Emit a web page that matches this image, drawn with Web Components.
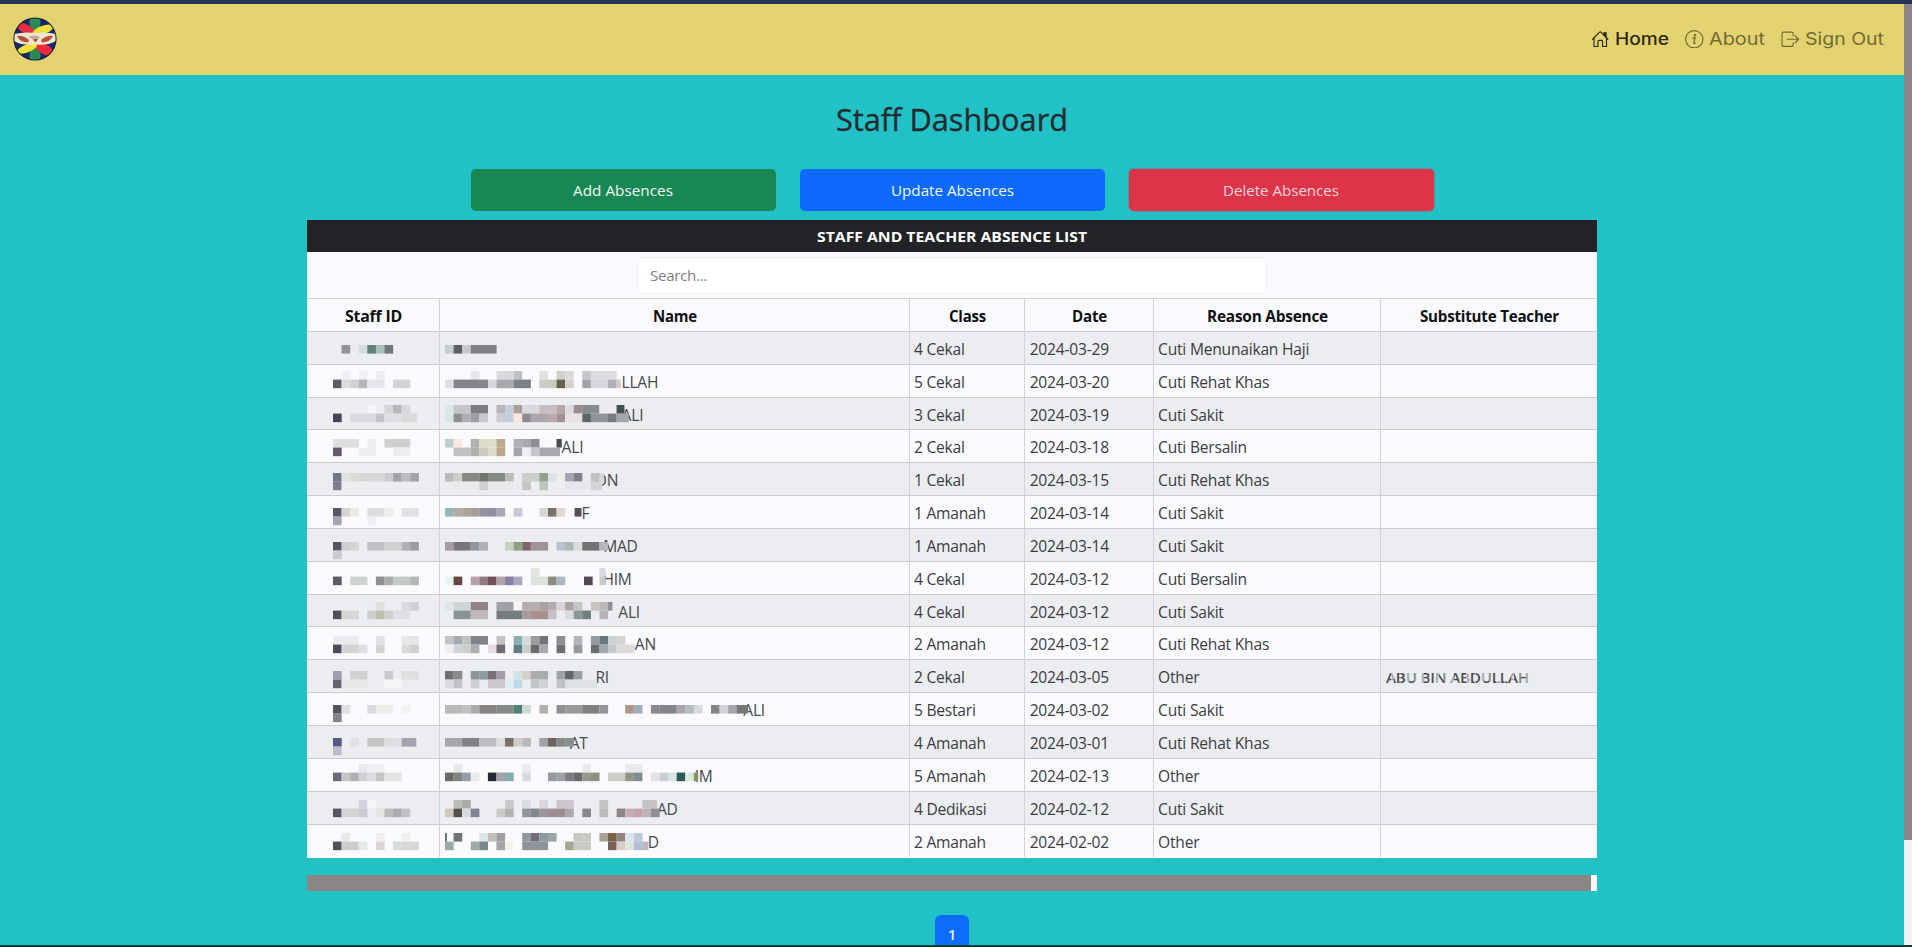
<!DOCTYPE html>
<html lang="en">
<head>
<meta charset="utf-8">
<title>Staff Dashboard</title>
<style>
html,body{margin:0;height:100%;overflow:hidden;background:#22c1c5}
body{font-family:"Open Sans","Noto Sans",sans-serif;color:#212529}
</style>
</head>
<body>
<staff-app>
  <top-nav slot="nav">
    <nav-item icon="house" active w="54">Home</nav-item>
    <nav-item icon="info" w="56">About</nav-item>
    <nav-item icon="exit" w="79">Sign Out</nav-item>
  </top-nav>
  <fit-text slot="title" w="232">Staff Dashboard</fit-text>
  <action-button slot="actions" tone="success" w="100">Add Absences</action-button>
  <action-button slot="actions" tone="primary" w="123">Update Absences</action-button>
  <action-button slot="actions" tone="danger" w="116">Delete Absences</action-button>
  <absence-table></absence-table>
  <page-button slot="pager">1</page-button>
</staff-app>
<script>
/* Sets its text to a given width by stretching it horizontally. */
class FitText extends HTMLElement{
  connectedCallback(){
    if(this.shadowRoot) return;
    this.attachShadow({mode:'open'}).innerHTML='<style>:host{display:inline-block;white-space:nowrap}span{display:inline-block;transform-origin:0 50%}</style><span><slot></slot></span>';
    const s=this.shadowRoot.querySelector('span'),w=+this.getAttribute('w');
    if(w){
      const n=s.getBoundingClientRect().width;
      s.style.transform=`scaleX(${w/n})`;
      s.style.marginRight=(w-n)+'px';
    }
  }
}

class CrestLogo extends HTMLElement{
  constructor(){
    super();
    this.attachShadow({mode:'open'}).innerHTML=`<style>:host{display:block;width:44px;height:44px}svg{display:block}</style>
<svg width="44" height="44" viewBox="0 0 44 44"><defs><clipPath id="c"><circle cx="22" cy="22" r="20.6"/></clipPath></defs>
<circle cx="22" cy="22" r="21.6" fill="#181a2e"/>
<g clip-path="url(#c)"><rect width="44" height="44" fill="#17286d"/>
<ellipse cx="22" cy="5.5" rx="5.5" ry="8.5" fill="#2c8b55"/><ellipse cx="22" cy="38.5" rx="5.5" ry="8.5" fill="#2c8b55"/>
<ellipse cx="13" cy="12" rx="10" ry="4.6" fill="#e32f3f" transform="rotate(28 13 12)"/>
<ellipse cx="31" cy="32" rx="10" ry="5" fill="#ea2b3b" transform="rotate(28 31 32)"/>
<ellipse cx="30" cy="13" rx="11" ry="4.2" fill="#eee13a" transform="rotate(-20 30 13)"/>
<ellipse cx="14" cy="31.5" rx="10.5" ry="4" fill="#eee13a" transform="rotate(-20 14 31.5)"/>
<path d="M1 17Q11 14.5 22 16Q33 14.5 43 17L43 24Q34 29 22 27.5Q10 29 1 24Z" fill="#efe6d0"/>
<path d="M4 19Q10 18 16 23L15 25.5Q7 25.5 4 19Z" fill="#b5523c"/><path d="M40 19Q34 18 28 23L29 25.5Q37 25.5 40 19Z" fill="#b5523c"/>
<path d="M16 19.5Q23 17 28 20.5Q23 20.5 21 24.5Q19 21.5 16 19.5Z" fill="#c9a894"/>
<path d="M20.5 22.5L25.5 21.5L22.5 25.5Z" fill="#9e4a40"/></g></svg>`;
  }
}

class TopNav extends HTMLElement{
  constructor(){
    super();
    this.attachShadow({mode:'open'}).innerHTML=`<style>:host{flex:none;display:flex;align-items:center;justify-content:space-between;height:71px;background:#e3d370;padding:0 20.5px 0 12.7px;box-sizing:border-box}
nav{display:flex;gap:16.5px}</style><crest-logo></crest-logo><nav><slot></slot></nav>`;
  }
}

const ICONS={
  house:'<path d="M2.6 7V14.3H6V10.2Q6 9 7 9H9Q10 9 10 10.2V14.3H13.4V7M1.4 8L7.2 2Q8 1.2 8.8 2L14.6 8"/><path d="M11.2 2.2H13.2V6.4L11.2 4.4Z" fill="currentColor" stroke-width=".6"/>',
  info:'<circle cx="8" cy="8" r="7.5"/><path d="M6.8 6.8L8.7 6.5L7.6 11.2Q7.6 11.9 8.9 11.3" stroke-width="1.1"/><circle cx="8.7" cy="4.5" r=".55" fill="currentColor"/>',
  exit:'<path d="M10.5 5V2.9Q10.5 1.8 9.4 1.8H2Q.9 1.8 .9 2.9V13.1Q.9 14.2 2 14.2H9.4Q10.5 14.2 10.5 13.1V11M5.5 8H15.2M12.2 5L15.2 8L12.2 11"/>'
};
class NavItem extends HTMLElement{
  connectedCallback(){
    if(this.shadowRoot) return;
    this.attachShadow({mode:'open'}).innerHTML=`<style>:host{display:flex;align-items:center;gap:5px;font:400 16.8px/26px Inter,sans-serif;color:#736932}
:host([active]){color:#2b2712;font-weight:500}
svg{display:block}</style>
<svg width="18.5" height="18.5" viewBox="0 0 16 16" fill="none" stroke="currentColor" stroke-width="1" stroke-linecap="round" stroke-linejoin="round">${ICONS[this.getAttribute('icon')]}</svg><fit-text w="${this.getAttribute('w')}">${this.textContent}</fit-text>`;
  }
}

class ActionButton extends HTMLElement{
  connectedCallback(){
    if(this.shadowRoot) return;
    this.attachShadow({mode:'open'}).innerHTML=`<style>:host{display:block;width:305px;height:42px}
button{display:flex;align-items:center;justify-content:center;width:100%;height:100%;border:0;border-radius:5px;padding:0;color:#f2f7f5;font:400 15.3px "Open Sans","Noto Sans",sans-serif;background:#198754}
:host([tone=primary]) button{background:#0d6afd}
:host([tone=danger]) button{background:#dc3549;color:#f6d5d9;box-shadow:0 0 2px #e02c44}</style>
<button><fit-text w="${this.getAttribute('w')}">${this.textContent}</fit-text></button>`;
  }
}

class PageButton extends HTMLElement{
  constructor(){
    super();
    this.attachShadow({mode:'open'}).innerHTML=`<style>:host{flex:none;display:block;width:34px;height:42px;border-radius:6px;background:#0d6cfd;color:#e6f1ff;font-weight:600;font-size:15px;line-height:38px;text-align:center}</style><slot></slot>`;
  }
}

/* Mosaic that covers private data. Blocks: column,count,strip,colour. */
const P=8.58;
class PixelMask extends HTMLElement{
  connectedCallback(){
    if(this.shadowRoot) return;
    const b=(this.getAttribute('blocks')||'').split(' ').filter(Boolean).map(t=>{
      const [c,n,r,k]=t.split(',');
      return `<rect x="${(c*P).toFixed(2)}" y="${(r*P).toFixed(2)}" width="${(n*P+.1).toFixed(2)}" height="8.6" fill="#${k}"/>`;
    }).join('');
    this.attachShadow({mode:'open'}).innerHTML=`<style>:host{display:block;position:absolute;left:0}svg{display:block;overflow:visible}</style><svg width="1" height="1" shape-rendering="geometricPrecision">${b}</svg>`;
  }
}

/* y: top of the first strip, id/n: mosaic blocks, t: visible end of the name, e: its right edge */
const ROWS=[
{y:345.3,id:'1,1,0,949498 3,1,0,d9dcde 4,1,0,628279 5,1,0,a8bfbb 6,1,0,737578',n:'0,1,0,c5cccb 1,1,0,5f5e62 2,1,0,c3cbcd 3,3,0,808184',c:'4 Cekal',d:'2024-03-29',r:'Cuti Menunaikan Haji'},
{y:370.8,id:'1,1,0,f1f1f3 3,1,0,f1f1f3 5,1,0,ededf0 0,1,1,5e5d6b 1,1,1,dcdcda 2,1,1,d0d0d2 3,1,1,b5b6ba 4,2,1,e6e6e9 7,2,1,d3d3d6',n:'3,1,0,e5e7e9 6,2,0,d8dadb 8,1,0,bcc3c6 11,1,0,dfe2dd 13,1,0,cfd0cc 14,1,0,d9dad7 16,1,0,c6c5ca 17,3,0,dcdadf 0,1,1,e1e0e5 1,4,1,848589 5,1,1,d5d8dc 6,2,1,a7a9ae 8,2,1,7a8083 11,1,1,cbccc4 12,1,1,c8cabf 13,1,1,67604b 14,1,1,d3d1cc 16,1,1,a5a3aa 17,2,1,d9d6dd 19,1,1,b1b0b5 20,0.5,1,cfced2',t:'LLAH',e:658.3,c:'5 Cekal',d:'2024-03-20',r:'Cuti Rehat Khas'},
{y:405.5,id:'4,1,0,f5f5f7 6,1,0,d6d6d9 7,1,0,b6b6bb 8,1,0,d9d9dc 0,1,1,454354 2,3,1,dadade 5,1,1,c3c3c8 6,2,1,dfdfe2 8,1.8,1,dadadd',n:'0,1,0,dce7e3 1,2,0,c4c6c9 3,2,0,7b7d80 6,1,0,b5b6b9 7,1,0,c4cedb 8,1,0,aa9d9c 9,2,0,dadadd 11,2,0,c6bec0 13,1,0,b6a6a8 14,1,0,dddadd 15,1,0,9c8c90 16,2,0,868b8c 18,2,0,ececef 20,0.9,0,424d4e 0,1,1,d9e7e3 1,1,1,8e8f94 2,1,1,b2afb4 3,1,1,9e9ea2 4,1,1,c8c8cc 6,1,1,cbcbd0 7,1,1,c1cddb 8,1,1,f7e6df 9,1,1,8f8990 10,2,1,aaa6ab 12,1,1,baa9ac 13,1,1,a29193 14,2,1,eae1e2 16,1,1,596769 17,2,1,8f9597 19,1,1,777b7f 20,1.4,1,a3a6a9',t:'ALI',e:643.3,c:'3 Cekal',d:'2024-03-19',r:'Cuti Sakit'},
{y:439.4,id:'0,3,0,dededf 4,1,0,eeeef0 6,3,0,cfcfd2 0,1,1,635c68 3,2,1,efeff2 7,2,1,ededf0',n:'0,1,0,bdcfcd 1,1,0,fae9df 3,1,0,b5b0ae 4,2,0,dddccb 6,1,0,baa98a 8,1,0,b1aeb5 9,1,0,a9a7ae 10,1,0,8f8d94 13,0.6,0,4c4a50 1,2,1,bfc0c2 3,1,1,b0b0ac 4,1,1,cdccbd 5,1,1,dddcc8 6,1,1,bba789 8,1,1,a6a3ab 9,1,1,eeeef2 10,1,1,c6c4ca 11,2.4,1,a8a7ac',t:'ALI',e:583.3,c:'2 Cekal',d:'2024-03-18',r:'Cuti Bersalin'},
{y:473.6,id:'0,1,0,747487 1,1,0,e1e2dd 2,1,0,d8dbd2 3,3,0,d7d7d9 6,1,0,cccbd0 7,1,0,a2a1aa 8,1,0,babac0 9,1,0,a1a2aa 0,1,1,7d7b8d 1,3,1,eeeef1',n:'0,1,0,b9bab9 1,1,0,cccec7 2,2,0,868981 4,1,0,717570 5,2,0,858983 7,1,0,babdb8 9,2,0,cccec8 11,1,0,959d8c 12,1,0,dfdfe7 14,1,0,a3a2b0 15,1,0,7f7e8b 17,1,0,c1c1c4 18,.5,0,d6d6d8 1,3,1,e9eaec 4,1,1,d0d1d1 5,3,1,e9e9eb 9,1,1,c3c6c3 11,1,1,bfc5bb 14,3,1,e6e6ed 17,1.3,1,d4d4d7',t:'ON',e:618.3,c:'1 Cekal',d:'2024-03-15',r:'Cuti Rehat Khas'},
{y:508,id:'0,1,0,585766 1,1,0,d9d2d4 2,1,0,e9e9e6 4,2,0,dcdddf 6,1,0,ededea 8,2,0,e1e1e4 0,1,1,a4a5b6 4,1,1,f0f0f2',n:'0,1,0,92b7bb 1,1,0,b1aca1 2,1,0,a9a399 3,1,0,a39d97 4,1,0,97929e 5,1,0,908ea1 6,1,0,a9a7b3 8,1,0,c5c8dd 11,1,0,d8d8d6 12,1,0,77706b 13,1,0,dfd7d1 15.1,.8,0,555058',t:'F',e:589.3,c:'1 Amanah',d:'2024-03-14',r:'Cuti Sakit'},
{y:542,id:'0,1,0,555461 1,1,0,cececf 2,1,0,d5d5d5 4,2,0,bebfc3 6,2,0,cfcfd0 8,1,0,b1b1b5 9,1,0,9b9ba3 0,1,1,cbcbcf',n:'0,1,0,a29ba0 1,2,0,77777b 3,1,0,9396a0 4,1,0,afb0b5 7,1,0,c7cfbf 8,1,0,90a182 9,1,0,80666c 10,2,0,a09196 13,1,0,bcc1d0 14,1,0,acb7b7 15,1,0,dadcdb 16,2,0,727275 18,1,0,b7b6bb',t:'MAD',e:637.7,c:'1 Amanah',d:'2024-03-14',r:'Cuti Sakit'},
{y:567.7,id:'0,1,1,5b5a66 2,2,1,ced2d3 5,1,1,8f8f92 6,1,1,aaacae 7,2,1,c4c7c7 9,1,1,b4b6b6',n:'10,1,0,e0e5df 18,.7,0,dcdadd 0,1,1,ebf3f0 1,1,1,664746 3,1,1,b5a1a6 4,1,1,917b83 5,1,1,725059 6,1,1,b1a1aa 7,1,1,827fa2 8,1,1,aaa8be 10,2,1,dde1dc 12,1,1,8c8c81 13,1,1,acb8c2 16.2,1,1,504b51 18,.7,1,ccc9ce',t:'HIM',e:631.7,c:'4 Cekal',d:'2024-03-12',r:'Cuti Bersalin'},
{y:602.2,id:'3,1,0,eaeef1 5,1,0,dfdfdc 8,1,0,dbdbdf 9,1,0,cfcfd4 0,1,1,4f505c 1,2,1,d6d6d7 4,1,1,cfcfce 5,1,1,bebfb0 6,1,1,cfcfce 7,2,1,dedfe2',n:'0,1,0,dde8e4 1,2,0,d0d6d8 3,2,0,908488 6,2,0,a0a1a4 8,1,0,f4f4f5 9,2,0,b4aeaf 11,1,0,aaa09f 12,1,0,b2acb2 13,1,0,d8d2df 14,1,0,aba3a3 15,1,0,c2c7c6 17,1,0,cbc1bf 18,1,0,bbb8bd 19,.5,0,8f9094 1,2,1,899496 3,2,1,c0b8bb 6,3,1,747c80 9,1,1,a59d9d 10,2,1,a6918e 12,1,1,c8c0c8 14,1,1,dadadc 15,1,1,8d9799 16,1,1,707d83 18,1,1,b5b5b8',t:'ALI',e:640,c:'4 Cekal',d:'2024-03-12',r:'Cuti Sakit'},
{y:636.6,id:'0,3,0,ebebed 5,1,0,e2e2e4 8,2,0,e7e7ea 0,1,1,464c59 1,2,1,d4d4d5 3,1,1,dedfe0 5,1,1,d4d5d0 8,1,1,dadadb 9,1,1,d0d0d3',n:'0,1,0,c3c3c3 1,1,0,a5a8b0 2,1,0,bec4bf 3,2,0,828387 6,1,0,c3c1c2 8,1,0,8facb2 9,1,0,d4dbdd 10,1,0,9c9d9f 11,1,0,717479 13,1,0,8c8d8e 15,1,0,b2b6b7 17,1,0,959a9b 18,1,0,68777b 19,1,0,c9d0d2 20,1,0,d4d4d3 0,1,1,eeeef1 1,1,1,d0d3d8 2,1,1,cdd0c8 3,1,1,abaeb2 5,1,1,e4dce4 6,1,1,726a73 8,1,1,607c86 9,1,1,cbd0cd 10,1,1,6e6b6d 11,1,1,a9aaad 13,1,1,6e7070 15,1,1,959a9b 17,1,1,6b6e70 18,1,1,a2a8aa 19,1,1,c5c8ca 20,2.1,1,dedad8',t:'AN',e:656,c:'2 Amanah',d:'2024-03-12',r:'Cuti Rehat Khas'},
{y:671,id:'0,1,0,9e9eae 2,2,0,cfd0d2 6,1,0,c9c9ce 8,2,0,dfdfe1 0,1,1,636272 1,3,1,e6e7e9 6,2,1,f5f5f8',n:'0,1,0,706e71 1,1,0,8a898c 3,1,0,929598 4,1,0,8b9da1 5,1,0,797176 6,1,0,a49ca6 8,1,0,d4e1e7 9,1,0,d4d0c7 10,2,0,a8acac 13,1,0,9fa2a3 14,1,0,626769 15,1,0,9a9ea2 0,1,1,d9dbdc 1,1,1,c2c3c7 3,1,1,cfced2 5,2,1,cdc7ce 7,1,1,dceef3 8,1,1,bbdae8 10,1,1,c1c5ca 11,1,1,cfd1d4 13,1,1,c1c2c5 14,3.7,1,dee1e4',t:'RI',e:609,c:'2 Cekal',d:'2024-03-05',r:'Other',s:'ABU BIN ABDULLAH'},
{y:705,id:'0,1,0,555461 1,1,0,e0e0e3 4,1,0,dbdbdc 5,2,0,ededea 8,1,0,f3f3ee 0,1,1,84838e',n:'0,2,0,b7b8b9 2,1,0,c0c1c1 3,1,0,aaaaad 4,2,0,898381 6,2,0,848888 8,1,0,4e8279 9,1,0,d0d8d3 11,1,0,b2afac 13,1,0,8f8e91 14,2,0,99999c 16,2,0,808083 18,1,0,949498 21,1,0,ad9786 22,1,0,a0afbc 24,1,0,89898e 25,2,0,838389 27,1,0,a6a6ac 28,1,0,b4bcbe 29,1,0,d7d9db 31,1,0,868488 32,1,0,d4d1d6 33,1,0,a6a4a7 34,1.3,0,777779',t:'ALI',e:765,c:'5 Bestari',d:'2024-03-02',r:'Cuti Sakit'},
{y:738.6,id:'0,1,0,595684 2,1,0,e0e0e9 4,2,0,c5c6c3 6,2,0,dedee1 8,1.7,0,a3a2ae 0,1,1,bcbacb',n:'0,2,0,a6a6aa 2,2,0,828089 4,2,0,bcbdc3 6,1,0,ddd 7,1,0,787067 8,1,0,cfccca 9,1,0,bbb7b6 11,1,0,a1a1a5 12,1,0,6b6460 13,1,0,86888b 14,1,0,87938d',t:'AT',e:587.7,c:'4 Amanah',d:'2024-03-01',r:'Cuti Rehat Khas'},
{y:764.4,id:'3,1,0,e8e8eb 4,2,0,efeff2 0,1,1,69687a 1,1,1,c6c3c5 2,1,1,b4aeb0 3,1,1,cfcdd5 4,1,1,dbdbe0 5,1,1,c4c3c6 6,2,1,e3e3e4',n:'1,1,0,e5e7ea 9,1,0,eaeaed 16,1,0,eaeaee 21,2,0,e9e9ed 0,1,1,6b6962 1,1,1,7e8381 2,1,1,949bab 3,1,1,ebe9ef 5,1,1,262a33 6,1,1,a5a2aa 7,1,1,86abb4 9,1,1,dadadc 12,1,1,96999c 13,1,1,9fa3a8 14,1,1,7b7d82 15,1,1,696a6c 16,1,1,93998e 17,1,1,8f917d 19,2,1,cfcec5 21,1,1,95948b 22,1,1,7f8b95 24,1,1,e3e3e5 25,1,1,cacfd2 26,1,1,dbe2e2 27,1,1,30565b 28,1,1,d5ebdb 29,.5,1,899065',t:'IM',e:712.7,c:'5 Amanah',d:'2024-02-13',r:'Other'},
{y:799.8,id:'3,1,0,d3d1da 4,1,0,f5f5f7 0,1,1,575663 1,2,1,d2d3d2 3,1,1,cbcad3 5,1,1,e5e5e8 6,1,1,bbbbbe 7,1,1,acacb0 8,1,1,c2c2c4',n:'1,1,0,bdbdb9 2,1,0,a9a8aa 7,1,0,c7c7c8 9,1,0,dddddf 11,1,0,d7d7da 13,2,0,cbc6cb 18,1,0,c4c4c5 23,1.7,0,c6c1c4 0,1,1,cdcabc 1,1,1,55524d 2,1,1,d9dcdc 3,1,1,828492 6,1,1,c9cbc7 7,1,1,b1b2b3 9,1,1,91949a 10,1,1,83858e 11,1,1,9b969b 12,2,1,9c8d95 14,1,1,a9a9ac 16,1,1,88888c 18,1,1,b9babb 20,1,1,8d8583 21,1,1,c4acb2 22,1,1,c69fad 23,1,1,bab3b8 24,1,1,908f93',t:'AD',e:677.7,c:'4 Dedikasi',d:'2024-02-12',r:'Cuti Sakit'},
{y:833,id:'1,1,0,e6e7e6 5,1,0,eeeeec 8,1,0,eeefed 0,1,1,4d5153 1,2,1,cacdcb 3,1,1,e3eae8 5,1,1,dad4d4 7,1,1,d6ddd6 8,2,1,d7d7d7',n:'0,.2,0,606870 1,1,0,727673 4,1,0,dbe5e7 5,1,0,c0bdb7 6,1,0,a29da0 9,1,0,94979e 10,1,0,6f6d7a 11,1,0,90989f 12,1,0,97a7aa 15,1,0,c6c7c2 16,1,0,c9c9c2 18,1,0,aaa295 19,1,0,7b6149 20,1,0,8e877d 21,1,0,dce5ed 22,1,0,bfc9d9 0,1,1,9da9a4 3,1,1,9ca8a9 4,1,1,7a888c 6,1,1,a7a2a6 7,1,1,eff4e8 9,3,1,8d949b 14,1,1,a6a693 15,2,1,c8cac6 19,1,1,7a6250 20,1,1,d8cdc9 21,1,1,dde5dc 22,1,1,afbdd5 23,.7,1,bab8c3',t:'D',e:659,c:'2 Amanah',d:'2024-02-02',r:'Other'}];

const PITCH=32.85, TOP=332;
class AbsenceTable extends HTMLElement{
  constructor(){
    super();
    const heads=[['Staff ID',57],['Name',44],['Class',37],['Date',35],['Reason Absence',121],['Substitute Teacher',139]];
    const rows=ROWS.map((r,i)=>{
      const dy=(r.y-TOP-i*PITCH).toFixed(2);
      return `<div class="row"><div><pixel-mask style="top:${dy}px;left:26px" blocks="${r.id}"></pixel-mask></div>
<div><span class="tail" style="width:${((r.e||445)-444.3).toFixed(1)}px">${r.t||''}</span><pixel-mask style="top:${dy}px;left:5px" blocks="${r.n}"></pixel-mask></div>
<div>${r.c}</div><div>${r.d}</div><div>${r.r}</div><div>${r.s?`<span class="worn"><fit-text w="143">${r.s}</fit-text></span>`:''}</div></div>`;
    }).join('');
    this.attachShadow({mode:'open'}).innerHTML=`<style>
:host{display:block;width:1290.4px;height:637.6px;background:#fafafe;font-size:15.6px;overflow:hidden;color:#3b3d42}
.cap{height:32px;background:#212327;color:#fff;font-weight:700;font-size:15px;line-height:33px;text-align:center}
.search{height:47px;display:flex;justify-content:center;align-items:center;box-sizing:border-box;border-bottom:1px solid #cfd0d4}
input{width:630px;height:37px;margin:0;box-sizing:border-box;border:1px solid #eff0f4;border-radius:6px;background:#fff;padding:0 12px;font:400 15.2px "Open Sans","Noto Sans",sans-serif;outline:0}
input::placeholder{color:#808287;opacity:1;letter-spacing:-.35px}
.row{display:grid;grid-template-columns:133.2px 469.6px 115.8px 128.4px 227.2px 1fr;grid-template-rows:${PITCH}px;height:${PITCH}px}
.row>div{position:relative;min-height:0;height:100%;box-sizing:border-box;border-right:1px solid #d2d3d7;border-bottom:1px solid #cbccd0;padding:0 0 0 4.3px;line-height:34px;white-space:nowrap;letter-spacing:-.22px}
.row>div:last-child{border-right:0}
.row:last-child>div{border-bottom:0}
.body .row:nth-child(odd){background:#ecedf0}
.head>div{font-weight:700;font-size:15.2px;color:#0f1012;text-align:center;padding:0 0 0 1px;line-height:34px}
.row.head>div{border-bottom:1px solid #cbccd0}
.tail{display:inline-block;text-align:right;color:#46484c}
.worn{position:relative;display:inline-block;font-weight:600;font-size:14px;color:#4c4e52;margin-left:1px}
.worn::after{content:"";position:absolute;inset:8px 0;background:repeating-linear-gradient(90deg,transparent 0 5px,#ecedf090 5px 8px,transparent 8px 13px,#ecedf060 13px 15px)}
</style><div class="cap"><fit-text w="270">STAFF AND TEACHER ABSENCE LIST</fit-text></div>
<div class="search"><input placeholder="Search..."></div>
<div class="row head">${heads.map(h=>`<div><fit-text w="${h[1]}">${h[0]}</fit-text></div>`).join('')}</div>
<div class="body">${rows}</div>`;
  }
}

class StaffApp extends HTMLElement{
  constructor(){
    super();
    this.attachShadow({mode:'open'}).innerHTML=`<style>
:host{display:flex;flex-direction:column;height:100vh;background:#22c1c5}
.edge{flex:none;height:3.5px;background:#263454}
.foot{flex:none;height:2px;background:#073c38}
.view{flex:1;min-height:0;display:flex}
.page{flex:1;height:100%;overflow:hidden;display:flex;flex-direction:column}
main{flex:none;display:flex;flex-direction:column;align-items:center;width:1904px}
.title{font-size:30.8px;font-weight:500;line-height:40px;height:40px;margin-top:24.5px;color:#232b30;-webkit-text-stroke:.35px #232b30}
.actions{display:flex;gap:24px;margin:30px 0 9px}
.hbar{width:1290.4px;height:16.5px;margin:17px 0 23.5px;background:#8a8686;display:flex;justify-content:flex-end}
.hbar i{width:6.5px;background:#f8f8f2}
.vbar{width:8px;background:#f6f1f0}
.vbar i{display:block;height:836.5px;background:#8c8388}
</style><div class="edge"></div><div class="view"><div class="page"><slot name="nav"></slot><main>
<div class="title"><slot name="title"></slot></div><div class="actions"><slot name="actions"></slot></div>
<slot></slot><div class="hbar"><i></i></div><slot name="pager"></slot></main></div><div class="vbar"><i></i></div></div><div class="foot"></div>`;
  }
}
/* fit-text measures itself, so it is defined once every container has its styles */
[['crest-logo',CrestLogo],['nav-item',NavItem],['top-nav',TopNav],['action-button',ActionButton],['page-button',PageButton],['pixel-mask',PixelMask],['absence-table',AbsenceTable],['staff-app',StaffApp],['fit-text',FitText]].forEach(([n,c])=>customElements.define(n,c));
</script>
</body>
</html>
